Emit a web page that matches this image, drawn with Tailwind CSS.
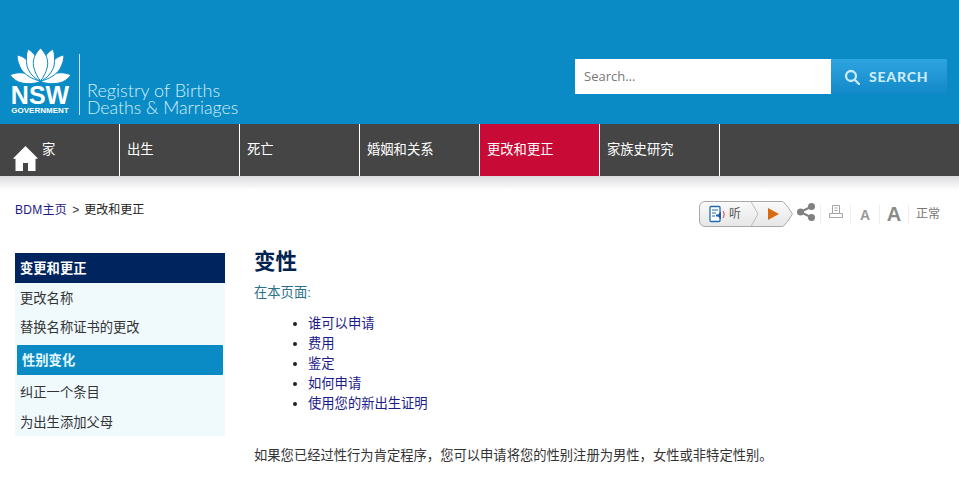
<!DOCTYPE html>
<html lang="zh">
<head>
  <meta charset="UTF-8">
  <meta name="viewport" content="width=device-width, initial-scale=1.0">
  <title>变性</title>
  <script src="https://cdn.jsdelivr.net/npm/@tailwindcss/browser@4"></script>
</head>
<body class="bg-white font-['Liberation_Sans','Noto_Sans_CJK_SC',sans-serif] text-[13px] text-[#333] h-[480px] overflow-hidden">

  <!-- Header -->
  <header class="h-[124px] bg-[#0a8bc6] flex justify-between pl-[10px] pr-[12px]">
    <div class="flex items-start pt-[48px]">
      <div class="w-[61px] flex flex-col items-center text-white">
        <svg width="61" height="36" viewBox="0 0 61 36" fill="#fff" stroke="#0a8bc6" stroke-width="1">
          <path d="M0 27c6-3 14-3 20 0 4 2 7 4 10 7-7 2-13 2-18 1-5-1-9-4-12-8z"/>
          <path d="M61 27c-6-3-14-3-20 0-4 2-7 4-10 7 7 2 13 2 18 1 5-1 9-4 12-8z"/>
          <path d="M7 7c6 1 11 5 15 11 3 5 6 10 8 15-8-2-15-6-19-12-2-4-4-9-4-14z"/>
          <path d="M54 7c-6 1-11 5-15 11-3 5-6 10-8 15 8-2 15-6 19-12 2-4 4-9 4-14z"/>
          <path d="M18 1c5 3 9 8 11 14 1 6 1 12 1 18-6-3-11-8-13-15-1-6-1-12 1-17z"/>
          <path d="M43 1c-5 3-9 8-11 14-1 6-1 12-1 18 6-3 11-8 13-15 1-6 1-12-1-17z"/>
          <path d="M30.500 0c5 5 8 11 7 18-1 6-4 11-7 15-3-4-6-9-7-15-1-7 2-13 7-18z"/>
        </svg>
        <div class="font-bold text-[25px] leading-[20px] mt-[1px] -ml-[1px]">NSW</div>
        <div class="font-bold text-[8px] leading-[9px] mt-[1px] -ml-[1px] whitespace-nowrap">GOVERNMENT</div>
      </div>
      <div class="w-px h-[61px] bg-[#bfe3f3] ml-[8px] mt-[6px]"></div>
      <div class="ml-[7px] mt-[34px] font-['Lato',sans-serif] font-light text-[#d3eefa] leading-[17px] whitespace-nowrap">
        <div class="text-[18.100px]">Registry of Births</div>
        <div class="text-[17.700px]">Deaths &amp; Marriages</div>
      </div>
    </div>
    <div class="flex items-start pt-[59px]">
      <div class="w-[256px] h-[35px] bg-white flex items-center pl-[9px] font-['Open_Sans',sans-serif] text-[13px] text-[#777]">Search...</div>
      <div class="w-[116px] h-[35px] bg-gradient-to-b from-[#2da5e0] to-[#1188c8] flex items-center pl-[13px] gap-[9px] text-[#cdeaf8]">
        <svg width="16" height="16" viewBox="0 0 16 16" fill="none" stroke="#cdeaf8" stroke-width="2.300"><circle cx="7" cy="7" r="5"/><path d="M10.500 10.500 15 15" stroke-linecap="round"/></svg>
        <span class="font-['Lato',sans-serif] font-black text-[14px] tracking-[0.8px]">SEARCH</span>
      </div>
    </div>
  </header>

  <!-- Nav -->
  <nav class="h-[52px] bg-[#454545] flex text-white text-[13.300px]">
    <a class="relative w-[120px] border-r border-white pl-[42px] pt-[16px]">
      家
      <svg class="absolute left-[13px] top-[22px]" width="25" height="25" viewBox="0 0 25 25" fill="#fff"><path d="M12.500 0 25 12.500 22.500 13V25H15V17H10V25H2.500V13L0 12.500z"/></svg>
    </a>
    <a class="w-[120px] border-r border-white pl-[7px] pt-[16px]">出生</a>
    <a class="w-[120px] border-r border-white pl-[7px] pt-[16px]">死亡</a>
    <a class="w-[120px] border-r border-white pl-[7px] pt-[16px]">婚姻和关系</a>
    <a class="w-[120px] border-r border-white pl-[7px] pt-[16px] bg-[#c70b36]">更改和更正</a>
    <a class="w-[120px] border-r border-white pl-[7px] pt-[16px]">家族史研究</a>
  </nav>
  <div class="h-[14px] bg-gradient-to-b from-[#dcdce0] to-white"></div>

  <!-- Breadcrumb and tools -->
  <div class="h-[63px] flex justify-between pl-[15px] pr-[19px]">
    <div class="pt-[11px] text-[12px] flex gap-[5px]"><span class="text-[#1d1a8a] tracking-[0.3px]">BDM主页</span> <span class="text-[#333]">&gt;</span> <span class="text-[#222]">更改和更正</span></div>
    <div class="flex items-start pt-[11px] text-[#888]">
      <div class="relative w-[94px] h-[26px] mr-[4px]">
        <svg class="absolute inset-0" width="94" height="26" viewBox="0 0 94 26">
          <defs><linearGradient id="btn" x1="0" y1="0" x2="0" y2="1"><stop offset="0" stop-color="#fafafa"/><stop offset="1" stop-color="#e6e6e6"/></linearGradient></defs>
          <path d="M6 .5H84Q88 4 93.500 13 88 22 84 25.500H6A5.500 5.500 0 0 1 .5 20V6A5.500 5.500 0 0 1 6 .5z" fill="url(#btn)" stroke="#a9a9a9"/>
          <path d="M52 .5 59 13 52 25.500" fill="none" stroke="#bdbdbd"/>
          <path d="M69 7 80 13 69 19z" fill="#d96a12"/>
          <rect x="11" y="5.500" width="10" height="15" rx="1" fill="#fff" stroke="#1f6bb0" stroke-width="1.300"/>
          <path d="M13 9h6M13 12h4M13 15h3" stroke="#1f6bb0"/>
          <path d="M17 13.500h2l3-3v8l-3-3h-2z" fill="#1f5fa8"/>
          <path d="M24 10c1.500 2 1.500 5 0 7" fill="none" stroke="#d0342c"/>
        </svg>
        <span class="absolute left-[30px] top-[4px] text-[12px] text-[#555]">听</span>
      </div>
      <svg class="mt-[2px] mr-[5px]" width="18" height="18" viewBox="0 0 18 18" fill="#808080"><circle cx="14.500" cy="3.500" r="3.500"/><circle cx="14.500" cy="14.500" r="3.500"/><circle cx="3.500" cy="9" r="3.500"/><path d="M3.500 9 14.500 3.500M3.500 9l11 5.500" stroke="#808080" stroke-width="2"/></svg>
      <div class="w-[30px] h-[19px] mt-[4px] border-l border-[#eee] flex justify-center">
        <svg width="14" height="14" viewBox="0 0 14 14" fill="none" stroke="#a5a5a5"><path d="M3.500 8V.5h7V8M.5 8.500h13v4H.5zM5.500 3h3M5.500 5.500h3"/></svg>
      </div>
      <div class="w-[29px] h-[19px] mt-[4px] border-l border-[#eee] flex justify-center items-end font-bold text-[14px] leading-[18px] text-[#999]">A</div>
      <div class="w-[29px] h-[19px] mt-[4px] border-l border-[#eee] flex justify-center items-end font-bold text-[20px] leading-[20px] text-[#8a8a8a]">A</div>
      <div class="w-[32px] h-[19px] mt-[4px] border-l border-[#eee] pl-[7px] text-[12px] leading-[19px] text-[#777]">正常</div>
    </div>
  </div>

  <!-- Body -->
  <div class="flex pl-[15px]">
    <aside class="w-[210px] h-[183px] bg-[#f0fafd] text-[13.300px]">
      <div class="h-[30px] leading-[31px] bg-[#00245e] text-white font-bold pl-[5px]">变更和更正</div>
      <div class="h-[30px] leading-[31px] pl-[5px]">更改名称</div>
      <div class="h-[32px] leading-[30px] pl-[5px]">替换名称证书的更改</div>
      <div class="h-[30px] leading-[31px] bg-[#0a8bc6] text-[#e6f8fd] font-bold mx-[2px] pl-[5px] rounded-[1px]">性别变化</div>
      <div class="h-[31px] leading-[35px] pl-[5px]">纠正一个条目</div>
      <div class="h-[30px] leading-[33px] pl-[5px]">为出生添加父母</div>
    </aside>
    <main class="ml-[29px] flex-1 -mt-[4px]">
      <h1 class="text-[21.500px] leading-[24px] font-bold text-[#00234f] mt-[1px]">变性</h1>
      <p class="mt-[9px] text-[13.300px] leading-[20px] text-[#2c6f8a]">在本页面:</p>
      <ul class="mt-[11px] pl-[54px] text-[13.300px] leading-[20px] text-[#1d1a8a]">
        <li class="relative before:content-[''] before:absolute before:left-[-15px] before:top-[8px] before:size-[4px] before:rounded-full before:bg-[#222]">谁可以申请</li>
        <li class="relative before:content-[''] before:absolute before:left-[-15px] before:top-[8px] before:size-[4px] before:rounded-full before:bg-[#222]">费用</li>
        <li class="relative before:content-[''] before:absolute before:left-[-15px] before:top-[8px] before:size-[4px] before:rounded-full before:bg-[#222]">鉴定</li>
        <li class="relative before:content-[''] before:absolute before:left-[-15px] before:top-[8px] before:size-[4px] before:rounded-full before:bg-[#222]">如何申请</li>
        <li class="relative before:content-[''] before:absolute before:left-[-15px] before:top-[8px] before:size-[4px] before:rounded-full before:bg-[#222]">使用您的新出生证明</li>
      </ul>
      <p class="mt-[32px] text-[13.300px] leading-[20px] text-[#333] whitespace-nowrap">如果您已经过性行为肯定程序，您可以申请将您的性别注册为男性，女性或非特定性别。</p>
    </main>
  </div>
</body>
</html>
